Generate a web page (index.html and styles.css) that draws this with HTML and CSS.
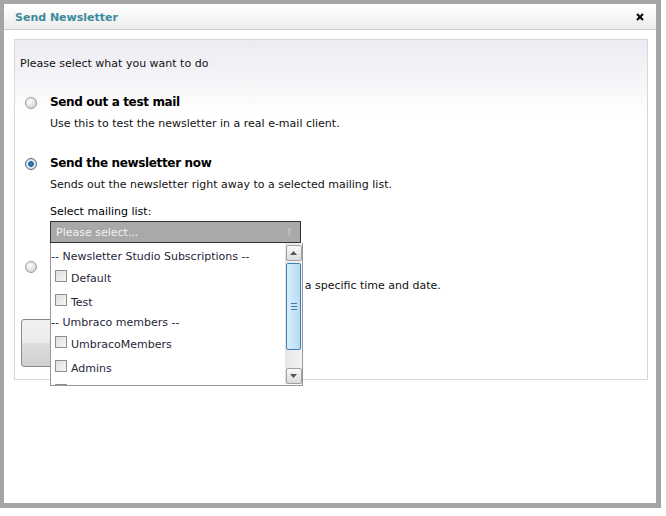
FILE: index.html
```html
<!DOCTYPE html>
<html lang="en">
<head>
    <meta charset="UTF-8">
    <title>Send Newsletter</title>
    <link rel="stylesheet" href="styles.css">
</head>
<body>
    <div class="dialog">
        <!-- Title bar -->
        <div class="titlebar">
            <span class="title">Send Newsletter</span>
            <svg class="close" width="8" height="8" viewBox="0 0 8 8">
                <path d="M1 1 L7 7 M7 1 L1 7" stroke="#000" stroke-width="2"/>
            </svg>
        </div>

        <!-- Panel -->
        <div class="panel">
            <p class="intro">Please select what you want to do</p>

            <div class="option first">
                <span class="radio"></span>
                <div class="option-body">
                    <h3>Send out a test mail</h3>
                    <p class="desc">Use this to test the newsletter in a real e-mail client.</p>
                </div>
            </div>

            <div class="option second">
                <span class="radio checked"></span>
                <div class="option-body">
                    <h3>Send the newsletter now</h3>
                    <p class="desc">Sends out the newsletter right away to a selected mailing list.</p>
                    <p class="label">Select mailing list:</p>
                    <div class="select-wrap">
                        <div class="select">
                            <span>Please select...</span>
                            <span class="arrow">&#8593;</span>
                        </div>
                        <!-- Open dropdown list -->
                        <div class="dropdown">
                            <div class="group">-- Newsletter Studio Subscriptions --</div>
                            <div class="item"><span class="check"></span>Default</div>
                            <div class="item"><span class="check"></span>Test</div>
                            <div class="group">-- Umbraco members --</div>
                            <div class="item"><span class="check"></span>UmbracoMembers</div>
                            <div class="item"><span class="check"></span>Admins</div>
                            <div class="item"><span class="check"></span></div>
                            <div class="scrollbar">
                                <div class="sb-btn up"><svg width="7" height="4" viewBox="0 0 7 4"><path d="M0 4 L3.5 0 L7 4 Z" fill="#555"/></svg></div>
                                <div class="sb-thumb"><span></span><span></span><span></span></div>
                                <div class="sb-btn down"><svg width="7" height="4" viewBox="0 0 7 4"><path d="M0 0 L3.5 4 L7 0 Z" fill="#555"/></svg></div>
                            </div>
                        </div>
                    </div>
                </div>
            </div>

            <div class="option third">
                <span class="radio"></span>
                <div class="option-body">
                    <h3>Schedule the newsletter</h3>
                    <p class="desc">Sends out the newsletter to the chosen list at a specific time and date.</p>
                </div>
            </div>

            <button class="send-btn">Send newsletter</button>
        </div>
    </div>
</body>
</html>
```

FILE: styles.css
```css
/* General */
body {
    margin: 0;
    background: #ffffff;
    font-family: "DejaVu Sans", sans-serif;
    font-size: 11px;
    color: #111;
}
p, h3 {
    margin: 0;
}

/* Dialog frame */
.dialog {
    width: 652px;
    height: 499px;
    border-style: solid;
    border-color: #a5a5a5;
    border-width: 4px 5px 5px 4px;
    background: #ffffff;
}

.titlebar {
    height: 25px;
    display: flex;
    align-items: center;
    justify-content: space-between;
    padding: 0 12px 0 11px;
    background: linear-gradient(#ffffff, #ededed);
    border-bottom: 1px solid #cfcfcf;
}
.title {
    font-weight: bold;
    font-size: 11px;
    color: #3b8a9c;
    padding-top: 1px;
}

/* Panel */
.panel {
    height: 339px;
    margin: 9px 8px 0 10px;
    padding: 0 5px;
    border: 1px solid #d8d8d8;
    background: linear-gradient(#ebebf2 0, #ffffff 75px);
}
.intro {
    line-height: 14px;
    padding-top: 17px;
}

.option {
    display: flex;
    align-items: flex-start;
}
.option.first { margin-top: 23px; }
.option.second { margin-top: 24px; }
.option.third { margin-top: 13px; }

.radio {
    width: 10px;
    height: 10px;
    margin: 3px 13px 0 5px;
    border: 1px solid #9a9a9a;
    border-radius: 50%;
    background: radial-gradient(circle at 40% 35%, #ffffff, #d6d6d6 70%);
    flex-shrink: 0;
}
.option.third .radio { margin-top: 5px; }
.radio.checked {
    border-color: #4a6a8a;
    background: radial-gradient(circle, #3a8fd0 0, #1c5d99 35%, #e8eef4 45%, #c8d4e0 100%);
}

.option-body h3 {
    font-size: 12px;
    font-weight: bold;
    line-height: 16px;
    letter-spacing: -0.35px;
    color: #000;
}
.option-body .desc {
    line-height: 14px;
    margin-top: 7px;
}
.option-body .label {
    line-height: 14px;
    margin-top: 13px;
    color: #000;
}

/* Select */
.select-wrap {
    position: relative;
    margin-top: 2px;
    width: 251px;
}
.select {
    height: 20px;
    border: 1px solid #333;
    background: #a9a9a9;
    color: #f2f2f2;
    display: flex;
    align-items: center;
    justify-content: space-between;
    padding: 0 6px 0 5px;
}
.select .arrow {
    color: #c4c4c4;
    font-weight: bold;
}

/* Dropdown list lying over the panel */
.dropdown {
    position: absolute;
    top: 22px;
    left: 0;
    width: 251px;
    height: 137px;
    padding-top: 5px;
    border: 1px solid #999;
    border-top: none;
    background: #fff;
    overflow: hidden;
    z-index: 2;
    color: #1f1f3a;
}
.group {
    height: 18px;
    line-height: 18px;
    white-space: nowrap;
}
.item {
    height: 18px;
    padding-top: 6px;
    display: flex;
    align-items: flex-start;
    line-height: 14px;
}
.item .check {
    width: 10px;
    height: 10px;
    margin: -2px 4px 0 4px;
    border: 1px solid #8e8e8e;
    background: linear-gradient(135deg, #dcdcdc, #f8f8f8);
    flex-shrink: 0;
}

.scrollbar {
    position: absolute;
    top: 0;
    right: 0;
    width: 17px;
    height: 141px;
    background: linear-gradient(90deg, #e6e6e6, #f4f4f4);
    display: flex;
    flex-direction: column;
    align-items: center;
}
.sb-btn {
    width: 14px;
    height: 14px;
    border: 1px solid #a0a0a0;
    border-radius: 2px;
    background: linear-gradient(#fafafa, #dcdcdc);
    display: flex;
    align-items: center;
    justify-content: center;
}
.sb-btn.up { margin-top: 2px; }
.sb-btn.down { margin-top: auto; }
.sb-thumb {
    margin-top: 2px;
    width: 13px;
    height: 85px;
    border: 1px solid #3c7fb1;
    border-radius: 2px;
    background: linear-gradient(90deg, #d9eefc, #b5dcf6);
    display: flex;
    flex-direction: column;
    align-items: center;
    justify-content: center;
    gap: 2px;
}
.sb-thumb span {
    width: 6px;
    height: 1px;
    background: #4d7596;
}

/* Button behind the list */
.send-btn {
    display: block;
    margin: 26px 0 0 1px;
    width: 230px;
    height: 48px;
    border: 1px solid #8a8a8a;
    border-radius: 3px;
    background: linear-gradient(#f2f2f2 0, #ebebeb 50%, #dddddd 51%, #cfcfcf 100%);
    font-family: "DejaVu Sans", sans-serif;
    font-size: 12px;
}
```
